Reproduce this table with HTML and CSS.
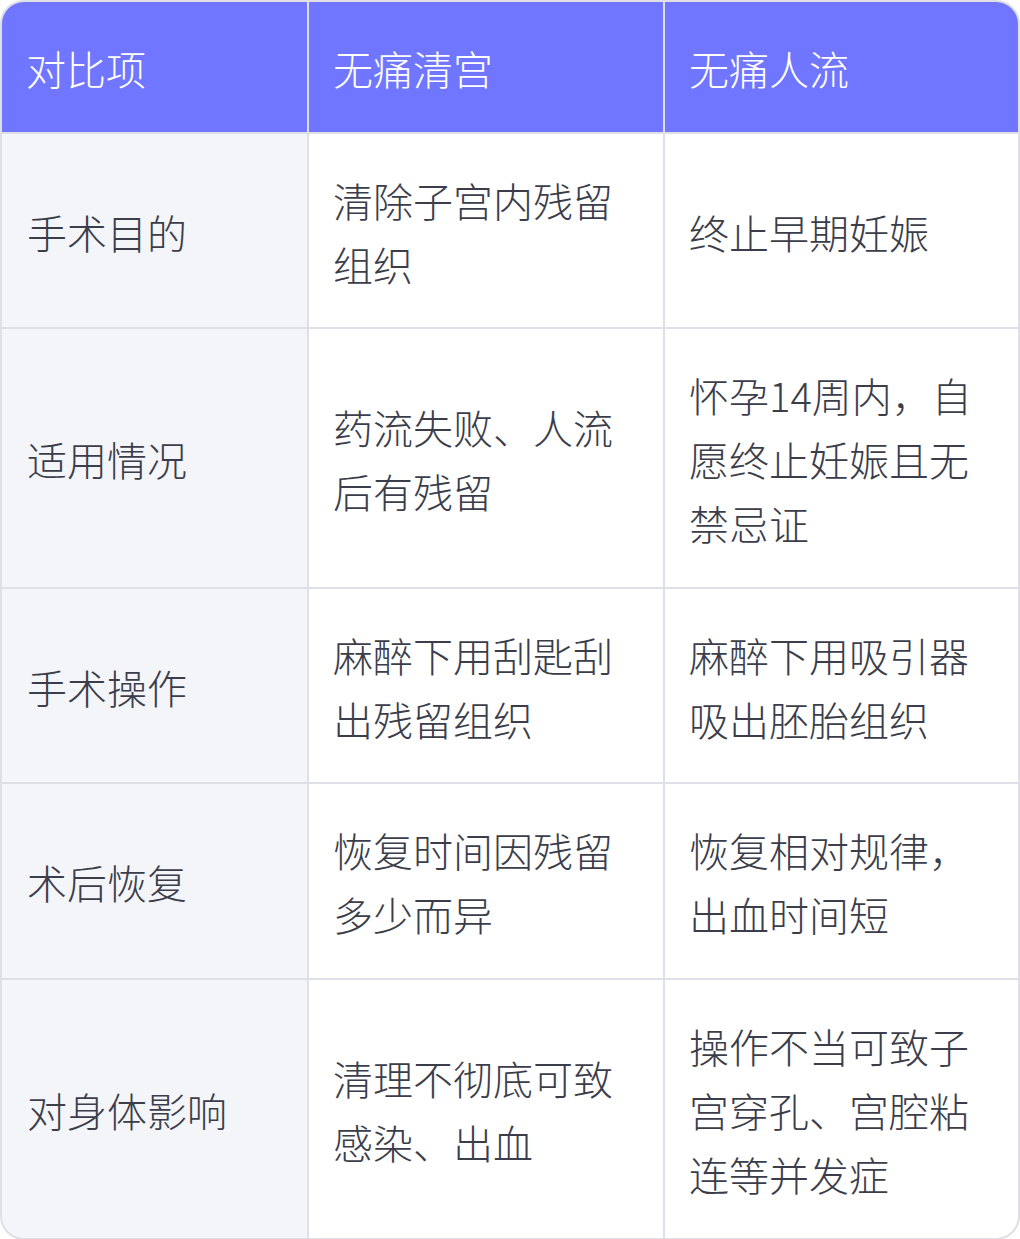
FILE: index.html
```html
<!DOCTYPE html>
<html lang="zh-CN">
<head>
<meta charset="utf-8">
<link rel="stylesheet" href="styles.css">
<title>无痛清宫与无痛人流对比</title>
</head>
<body>
<div class="table">
  <div class="cell head">对比项</div>
  <div class="cell head">无痛清宫</div>
  <div class="cell head">无痛人流</div>

  <div class="cell label">手术目的</div>
  <div class="cell">清除子宫内残留组织</div>
  <div class="cell">终止早期妊娠</div>

  <div class="cell label">适用情况</div>
  <div class="cell">药流失败、人流后有残留</div>
  <div class="cell">怀孕14周内，自愿终止妊娠且无禁忌证</div>

  <div class="cell label">手术操作</div>
  <div class="cell">麻醉下用刮匙刮出残留组织</div>
  <div class="cell">麻醉下用吸引器吸出胚胎组织</div>

  <div class="cell label">术后恢复</div>
  <div class="cell">恢复时间因残留多少而异</div>
  <div class="cell">恢复相对规律，出血时间短</div>

  <div class="cell label">对身体影响</div>
  <div class="cell">清理不彻底可致感染、出血</div>
  <div class="cell">操作不当可致子宫穿孔、宫腔粘连等并发症</div>
</div>
</body>
</html>
```

FILE: styles.css
```css
html, body {
  margin: 0;
  padding: 0;
  background: #ffffff;
}

body {
  font-family: "Noto Sans CJK SC", "Noto Sans", sans-serif;
}

.table {
  display: grid;
  grid-template-columns: 305px 354px 1fr;
  gap: 2px;
  background: #dfe0e5;
  border: 2px solid #dfe0e5;
  border-radius: 24px;
  overflow: hidden;
  width: 1020px;
  box-sizing: border-box;
}

.cell {
  background: #ffffff;
  color: #3b3e4a;
  font-size: 40px;
  line-height: 64px;
  padding: 34px 21px 31.6px 24px;
  display: flex;
  align-items: center;
  font-weight: 300;
}

.cell.head {
  background: #7076ff;
  color: #ffffff;
}

.cell.label {
  background: #f4f5f9;
  padding-left: 25px;
}
```
